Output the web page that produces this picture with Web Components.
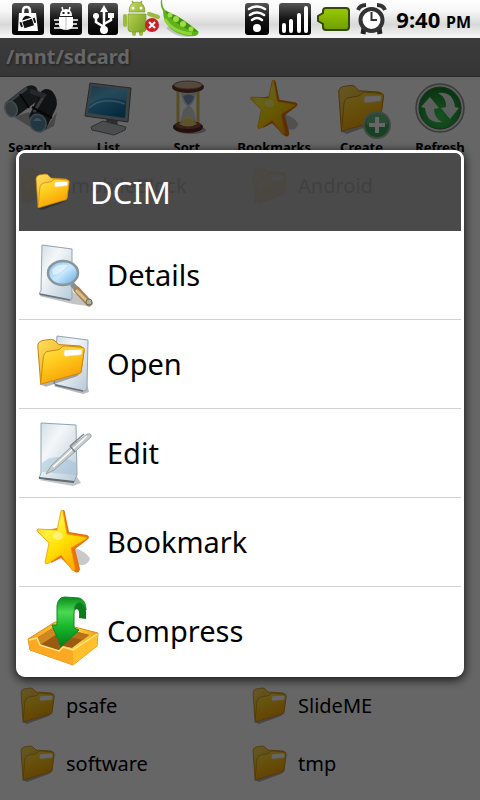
<!DOCTYPE html>
<html lang="en">
<head>
<meta charset="utf-8">
<meta name="viewport" content="width=device-width, initial-scale=1">
<title>/mnt/sdcard</title>
<style>
	html, body {
		height: 100%;
		margin: 0;
	}

	body {
		font-family: "Noto Sans", "Open Sans", sans-serif;
		color:       #000;
	}
</style>
</head>
<body>

<file-manager>
	<status-bar slot="status"></status-bar>
	<title-bar slot="title">/mnt/sdcard</title-bar>
	<tool-bar slot="tools">
		<tool-button icon="search">Search</tool-button>
		<tool-button icon="monitor">List</tool-button>
		<tool-button icon="hourglass">Sort</tool-button>
		<tool-button icon="starSmall">Bookmarks</tool-button>
		<tool-button icon="create">Create</tool-button>
		<tool-button icon="refresh">Refresh</tool-button>
	</tool-bar>
	<file-list slot="top">
		<file-item>.mobileBlock</file-item>
		<file-item>Android</file-item>
	</file-list>
	<file-list slot="bottom">
		<file-item>psafe</file-item>
		<file-item>SlideME</file-item>
		<file-item>software</file-item>
		<file-item>tmp</file-item>
	</file-list>
	<context-menu slot="menu" heading="DCIM">
		<menu-row icon="details">Details</menu-row>
		<menu-row icon="open">Open</menu-row>
		<menu-row icon="edit">Edit</menu-row>
		<menu-row icon="star">Bookmark</menu-row>
		<menu-row icon="compress">Compress</menu-row>
	</context-menu>
</file-manager>

<script>
(function ()
{
	const FOLDER =
	`
	<linearGradient id="fb" x1="0" y1="0" x2="1" y2="1">
		<stop offset="0" stop-color="#ffe05c"/><stop offset="1" stop-color="#e08c04"/>
	</linearGradient>
	<linearGradient id="ff" x1="0" y1="0" x2=".5" y2="1">
		<stop offset="0" stop-color="#ffe256"/><stop offset=".45" stop-color="#ffcb1c"/><stop offset="1" stop-color="#f79e04"/>
	</linearGradient>
	<path d="M3 35 L8 37 L30 29 L34 25Z" fill="#000" opacity=".3"/>
	<path d="M4 34 L2 6 Q2 3 5 2 L11 1 Q14 1 15 3 L17 5 L32 6 Q35 7 35 10 L33 25Z" fill="url(#fb)" stroke="#bf7f0c" stroke-width=".7"/>
	<path d="M4 35 L6 14 Q7 10 10 10 L16 9 Q18 9 19 7 Q20 6 22 6 L33 7 Q36 7 35 10 L33 25 Q33 27 31 27Z" fill="url(#ff)" stroke="#c9880c" stroke-width=".7"/>
	<path d="M21 9 L33 8.500 Q34 9 33.500 12 Q33 13 31 13 L22 14 Q20.500 14 20.500 12Z" fill="#fff" stroke="#e9cf78" stroke-width=".5"/>
	`;

	const STAR =
	`
	<linearGradient id="st" x1="0" y1="0" x2=".7" y2="1">
		<stop offset="0" stop-color="#ffb400"/><stop offset=".35" stop-color="#fff23c"/><stop offset=".6" stop-color="#ffe000"/><stop offset="1" stop-color="#ffa800"/>
	</linearGradient>
	<path d="M48 42 Q60 46 63 53 Q60 60 53 59 L42 55Z" fill="#777" opacity=".4"/>
	<path d="M36 4 Q38 4 38 7 L42 26 L60 29 Q64 31 60 34 L48 43 L53 63 Q52 68 48 66 L34 52 L24 57 L23 37 L12 25 L31 22Z" fill="#e8710a"/>
	<path d="M34 5 L30 24 L11 23 Q9 24 11 26 L22 37 L18 56 Q18 59 22 57 L34 49 L45 64 Q48 66 48 62 L44 42 L59 33 Q61 31 58 31 L40 28 L36 5Q35 3 34 5Z" fill="url(#st)" stroke="#f39a05" stroke-width=".8"/>
	<ellipse cx="31" cy="30" rx="5" ry="4" fill="#fff" opacity=".4"/>
	`;

	const PAGE =
	`
	<linearGradient id="pg" x1="0" y1="0" x2="1" y2="1">
		<stop offset="0" stop-color="#cfdde4"/><stop offset=".35" stop-color="#f4f7f8"/><stop offset="1" stop-color="#b6c8d6"/>
	</linearGradient>
	`;

	const TILE =
	`
	<linearGradient id="tl" x1="0" y1="0" x2="0" y2="1">
		<stop offset="0" stop-color="#555"/><stop offset=".5" stop-color="#151515"/><stop offset="1" stop-color="#000"/>
	</linearGradient>
	`;

	// name: [ viewBox, markup ]
	const ICONS =
	{
		folder: [ '0 0 38 38', FOLDER ],
		star: [ '0 0 72 72', STAR ],
		starSmall: [ '5 3 62 62', STAR ],

		details: [ '0 0 72 72', PAGE +
		`
		<linearGradient id="ln" x1="0" y1="0" x2="1" y2="1">
			<stop offset="0" stop-color="#7fbdf0"/><stop offset=".5" stop-color="#c9e7fd"/><stop offset="1" stop-color="#5ba4e2"/>
		</linearGradient>
		<path d="M12 57 L46 65 L60 67 L66 65 L44 52Z" fill="#555" opacity=".35"/>
		<path d="M15 6 L45 10 L45 59 Q45 62 42 61 L13 56 Q11 54 14 52Z" fill="url(#pg)" stroke="#8fa3b3"/>
		<path d="M13 55 L43 61" stroke="#66727c" stroke-width="1.500"/>
		<path d="M45 45 L53 54" stroke="#8b8f92" stroke-width="5"/>
		<path d="M50 51 L62 64" stroke="#a58556" stroke-width="7" stroke-linecap="round"/>
		<path d="M49 51 L60 62" stroke="#d9bc89" stroke-width="3"/>
		<circle cx="62" cy="63" r="3" fill="#aab09a" stroke="#6d6d55"/>
		<ellipse cx="36" cy="34" rx="15" ry="12" fill="url(#ln)" stroke="#8a949b" stroke-width="2.500"/>
		<path d="M25 31 Q30 24 41 26 Q34 35 26 36Z" fill="#fff" opacity=".55"/>
		` ],

		open: [ '0 0 72 72', PAGE +
		`
		<path d="M26 58 L56 66 L62 64 L60 56Z" fill="#555" opacity=".4"/>
		<path d="M30 8 L61 12 L60 60 Q59 64 56 63 L27 56Z" fill="url(#pg)" stroke="#8fa3b3"/>
		<path d="M28 57 L56 63" stroke="#66727c" stroke-width="1.500"/>
		<g transform="translate(8 10) scale(1.400 1.320)">${ FOLDER }</g>
		` ],

		edit: [ '0 0 72 72', PAGE +
		`
		<path d="M12 63 L46 69 L54 66 L50 60Z" fill="#555" opacity=".35"/>
		<path d="M14 6 L49 8 L50 58 L47 65 L12 61 L14 56Z" fill="url(#pg)" stroke="#8fa3b3"/>
		<path d="M15 46 Q28 34 49 46 L49 58 L15 55Z" fill="#9cc0d8" opacity=".5"/>
		<path d="M12 61 L47 65" stroke="#5f6a74" stroke-width="2"/>
		<path d="M19 57 L24 49 L46 28 L60 17 Q65 16 64 20 L50 33 L27 53Z" fill="#c6cbce" stroke="#8b949a" stroke-width=".8"/>
		<path d="M26 50 L48 30 L60 19" stroke="#fff" stroke-width="1.500"/>
		<path d="M43 29 L48 35 M43 29 L57 17" stroke="#7c858c" stroke-width="1.500" fill="none"/>
		` ],

		compress: [ '0 0 72 72',
		`
		<linearGradient id="ty" x1="0" y1="0" x2="1" y2="0">
			<stop offset="0" stop-color="#f5a21a"/><stop offset=".5" stop-color="#ffc73e"/><stop offset=".65" stop-color="#ffd84a"/><stop offset="1" stop-color="#f1a010"/>
		</linearGradient>
		<linearGradient id="ar" x1="0" y1="0" x2="0" y2="1">
			<stop offset="0" stop-color="#0a8a1d"/><stop offset=".3" stop-color="#4bd950"/><stop offset=".6" stop-color="#16b62c"/><stop offset="1" stop-color="#067a18"/>
		</linearGradient>
		<path d="M1 44 L28 27 L71 38 L70 51 L46 70 L3 55Z" fill="url(#ty)" stroke="#e08c10"/>
		<path d="M10 43 L29 31 L62 40 L45 53 L36 51 L32 56 L13 50Z" fill="#9a5a12"/>
		<path d="M10 43 L29 31 L30 39 L13 50Z" fill="#d08722"/>
		<path d="M29 31 L62 40 L56 45 L30 39Z" fill="#b97118"/>
		<path d="M1 44 L10 43 L13 50 L32 56 L36 51 L46 54 L46 70 L3 55Z" fill="#fbaa22"/>
		<path d="M46 54 L71 38 L70 51 L46 70Z" fill="#ffc02c"/>
		<path d="M2 45 L10 43 L13 50 L32 56 L36 52 L46 55 L70 39" fill="none" stroke="#ffe68a" stroke-width="1.500"/>
		<path d="M44 9 Q48 2 55 6 Q60 10 59 24 L52 23 Q53 12 48 15Z" fill="#0b7e1b"/>
		<path d="M30 30 L30 11 Q31 2 38 2 L52 3 Q59 5 59 15 Q56 6 51 8 Q47 10 47 19 L47 33 L52 35 L34 52 L25 30Z" fill="url(#ar)" stroke="#0a8a1d"/>
		` ],

		search: [ '0 0 56 56',
		`
		<path d="M12 38 L27 33 L42 52 L55 33 L52 47 L38 54Z" fill="#000" opacity=".3"/>
		<path d="M3 24 L22 9 Q29 4 34 8 L38 16 L34 23 L15 37 Q4 40 3 24Z" fill="#343c3f"/>
		<path d="M27 37 L38 14 Q43 7 50 12 Q57 20 54 29 L44 50 Q32 56 27 37Z" fill="#282f33"/>
		<path d="M8 22 L25 9 M32 33 L43 15" stroke="#8c9599" stroke-width="3"/>
		<path d="M18 15 L27 29 M30 28 L50 39" stroke="#111" stroke-width="2"/>
		<path d="M28 12 L43 17" stroke="#59646a" stroke-width="5"/>
		<ellipse cx="9" cy="30" rx="6" ry="8" fill="#82959e" stroke="#b0bcc0" stroke-width="1.500" transform="rotate(-20 9 30)"/>
		<ellipse cx="36" cy="44" rx="8" ry="9" fill="#548ba3" stroke="#a6b5bc" stroke-width="1.500" transform="rotate(-30 36 44)"/>
		<path d="M31 42 Q35 36 40 42Z" fill="#d5edf7" opacity=".6"/>
		` ],

		monitor: [ '0 0 56 56',
		`
		<linearGradient id="sc" x1="0" y1="0" x2=".6" y2="1">
			<stop offset="0" stop-color="#1e6490"/><stop offset=".4" stop-color="#3fa8d8"/><stop offset="1" stop-color="#126c9c"/>
		</linearGradient>
		<path d="M26 38 L38 40 L37 50 L27 49Z" fill="#6c747a"/>
		<path d="M11 48 L23 42 L46 48 L45 51 L34 56 L12 51Z" fill="#b8bfc3" stroke="#70787c"/>
		<path d="M10 4 L51 9 L48 43 L5 37Z" fill="#98a4ab" stroke="#5b656b"/>
		<path d="M12 7 L47 11 L45 39 L8 34Z" fill="url(#sc)"/>
		<path d="M9 26 Q21 14 46 22 L47 11 L12 7Z" fill="#9bd7f2" opacity=".35"/>
		<path d="M9 29 Q22 17 45 25" fill="none" stroke="#d5f3ff" stroke-width="1.500" opacity=".6"/>
		` ],

		hourglass: [ '0 0 56 56',
		`
		<ellipse cx="32" cy="51" rx="15" ry="4" fill="#000" opacity=".3"/>
		<path d="M22 9 H37 Q38 21 31 27 Q38 33 37 47 H22 Q21 33 28 27 Q21 21 22 9Z" fill="#b9c8d6" opacity=".7"/>
		<path d="M24 17 Q29 14 35 17 Q34 23 29 26 Q25 22 24 17Z" fill="#7b99bd"/>
		<path d="M22 46 Q24 39 29 36 Q35 39 36 46Z" fill="#f0df7b"/>
		<path d="M19 8 V47 M39 8 V47" stroke="#d8c04f" stroke-width="3"/>
		<ellipse cx="29" cy="48" rx="15" ry="6" fill="#5b2620"/>
		<ellipse cx="29" cy="46" rx="13" ry="4" fill="#8e5045"/>
		<path d="M20 45 Q29 35 38 45 Q29 50 20 45Z" fill="#e9cf6d"/>
		<ellipse cx="29" cy="8" rx="16" ry="6" fill="#6e342b"/>
		<ellipse cx="29" cy="6" rx="14" ry="4" fill="#d0b79a" stroke="#9a6d5c"/>
		` ],

		create: [ '0 0 56 56',
		`
		<g transform="translate(2 5) scale(1.350)">${ FOLDER }</g>
		<circle cx="43" cy="46" r="13" fill="#37a455" stroke="#a2b8a6" stroke-width="2"/>
		<path d="M32 45 A11 11 0 0 1 54 45 Q43 49 32 45Z" fill="#fff" opacity=".25"/>
		<path d="M43 38 V54 M35 46 H51" stroke="#fff" stroke-width="4"/>
		` ],

		refresh: [ '0 0 56 56',
		`
		<radialGradient id="rf" cx=".5" cy=".7" r=".7">
			<stop offset="0" stop-color="#3bd04d"/><stop offset="1" stop-color="#147f2b"/>
		</radialGradient>
		<circle cx="28" cy="29" r="24" fill="#e9eeea" stroke="#8b918d" stroke-width="1.500"/>
		<circle cx="28" cy="29" r="21" fill="url(#rf)" stroke="#4b6a50"/>
		<path d="M9 28 L18 18 L27 29 L22 30 Q22 39 30 43 Q15 45 13 29Z" fill="#e8eeea"/>
		<path d="M47 29 L38 40 L29 29 L34 28 Q35 19 26 14 Q41 12 43 28Z" fill="#e8eeea"/>
		` ],

		lock: [ '0 0 32 32', TILE +
		`
		<rect width="32" height="32" rx="3" fill="url(#tl)"/>
		<path d="M11 12 V8 Q11 4 14.500 4 Q18 4 18 8 V12" fill="none" stroke="#fff" stroke-width="2.500"/>
		<path d="M7 10 H24 L26 28 H6Z" fill="#fff"/>
		<g transform="rotate(-18 16 20)"><path d="M11 16 Q16 9 21 16Z M11 17 H21 V24 H11Z M8 17 H10 V22 H8Z M22 17 H24 V22 H22Z" fill="#111"/><path d="M10 16.500 H22" stroke="#fff"/></g>
		` ],

		bug: [ '0 0 32 32', TILE +
		`
		<rect width="32" height="32" rx="3" fill="url(#tl)"/>
		<path d="M12 4 L13 8 M20 4 L19 8 M4 17 H28 M5 21 H27 M4 25 H28" stroke="#fff" stroke-width="1.500"/>
		<path d="M10 13 Q10 6 16 6 Q22 6 22 13Z M9 14 H23 V23 Q21 27 16 27 Q11 27 9 23Z" fill="#fff"/>
		<path d="M16 14 V27" stroke="#bbb"/>
		<path d="M12.500 10 h2 M17.500 10 h2" stroke="#222" stroke-width="2"/>
		` ],

		usb: [ '0 0 30 32', TILE +
		`
		<rect width="30" height="32" rx="3" fill="url(#tl)"/>
		<path d="M16 27 V7 M16 24 L8 19 V14 M16 21 L23 17 V12" fill="none" stroke="#fff" stroke-width="2.500"/>
		<path d="M16 2 L20 9 H12Z" fill="#fff"/>
		<circle cx="16" cy="27" r="4" fill="#fff"/>
		<circle cx="8" cy="13" r="3" fill="#fff"/>
		<rect x="20" y="10" width="6" height="5" fill="#fff"/>
		` ],

		robot: [ '0 0 36 32',
		`
		<linearGradient id="rb" x1="0" y1="0" x2="1" y2="1">
			<stop offset="0" stop-color="#c4dd63"/><stop offset="1" stop-color="#759d1c"/>
		</linearGradient>
		<path d="M8 -2 L10 1 M18 -2 L16 1" stroke="#8eb32c" stroke-width="1.500"/>
		<path d="M1 13 V22 M25 11 L34 14 M10 26 V31 M17 26 V31" stroke="#9abb3e" stroke-width="4" stroke-linecap="round"/>
		<path d="M5 9 Q5 -1 13 -1 Q21 -1 21 9Z M4 11 H22 V27 Q21 29 18 29 H8 Q4 29 4 26Z" fill="url(#rb)" stroke="#78932d" stroke-width=".6"/>
		<circle cx="9" cy="5" r="1.500" fill="#fff"/><circle cx="17" cy="5" r="1.500" fill="#fff"/>
		<circle cx="28" cy="22" r="7" fill="#ca2028"/>
		<path d="M25 19 L31 25 M31 19 L25 25" stroke="#fff" stroke-width="2"/>
		` ],

		pea: [ '0 0 36 32',
		`
		<path d="M0 25 Q12 37 30 33 L10 20Z" fill="#777" opacity=".35"/>
		<path d="M-4 -3 Q-4 4 -1 7 Q6 11 11 13 Q20 18 32 28 Q34 31 29 33 Q15 34 5 26 Q-3 19 -3 8 Q-6 3 -5 -3Z" fill="#5eb31b"/>
		<path d="M-1 8 Q4 16 14 22 Q23 28 32 29 Q22 20 11 13Z" fill="#3f8f10"/>
		<g fill="#9edc45"><circle cx="4" cy="12" r="2.500"/><circle cx="10" cy="16" r="3"/><circle cx="17" cy="21" r="3"/><circle cx="25" cy="26" r="2.500"/></g>
		<path d="M-1 16 Q6 29 26 31" fill="none" stroke="#8fd53a" stroke-width="3"/>
		` ],

		wifi: [ '0 0 27 32', TILE +
		`
		<rect width="24" height="32" rx="3" fill="url(#tl)"/>
		<circle cx="12" cy="25" r="4" fill="#fff"/>
		<path d="M4 6 Q12 1 20 6 M5 12 Q12 7 19 12 M7 17 Q12 13 17 17" fill="none" stroke="#fff" stroke-width="2.500" stroke-linecap="round"/>
		` ],

		signal: [ '0 0 32 32', TILE +
		`
		<rect width="32" height="32" rx="3" fill="url(#tl)"/>
		<path d="M5 22 V28 M12 18 V28 M20 12 V28 M27 5 V28" stroke="#fff" stroke-width="4" stroke-linecap="round"/>
		` ],

		battery: [ '0 0 32 32',
		`
		<linearGradient id="bt" x1="0" y1="0" x2="0" y2="1">
			<stop offset="0" stop-color="#9aca00"/><stop offset="1" stop-color="#6f9e00"/>
		</linearGradient>
		<path d="M8 5 H28 Q31 5 31 8 V24 Q31 27 28 27 H8 Q5 27 5 24 V21 L0 18 V13 L5 10 V8 Q5 5 8 5Z" fill="url(#bt)" stroke="#344a08" stroke-width="2"/>
		` ],

		alarm: [ '0 0 32 32',
		`
		<path d="M1 7 Q3 2 9 2 M20 2 Q26 2 28 7" fill="none" stroke="#333" stroke-width="4"/>
		<path d="M7 25 L6 31 M22 25 L23 31" stroke="#222" stroke-width="5"/>
		<circle cx="14.500" cy="17" r="11" fill="#fff" stroke="#333" stroke-width="4"/>
		<path d="M14.500 9 V17 H20" fill="none" stroke="#333" stroke-width="2"/>
		` ],
	};

	function define( name, render )
	{
		customElements.define( name, class extends HTMLElement
		{
			constructor()
			{
				super();

				this.attachShadow({ mode: 'open' });
			}

			connectedCallback()
			{
				this.shadowRoot.innerHTML = render( this );
			}
		});
	}

	define( 'app-icon', $el =>
	{
		const [ box, markup ] = ICONS[ $el.getAttribute( 'name' ) ];

		return `
		<style>
			:host {
				display: block;
				flex:    none;
				width:   var( --icon-width, 32px );
				height:  var( --icon-height, 32px );
			}
			svg {
				display:  block;
				width:    100%;
				height:   100%;
				overflow: visible;
			}
		</style>
		<svg viewBox="${ box }" fill="none" aria-hidden="true">${ markup }</svg>
		`;
	});

	define( 'file-manager', () =>
	`
	<style>
		:host {
			display:        flex;
			flex-direction: column;
			min-height:     100%;
		}
		main {
			position:       relative;
			flex:           1;
			display:        flex;
			flex-direction: column;
			background:     #fff;
		}
		.files {
			flex:            1;
			display:         flex;
			flex-direction:  column;
			justify-content: space-between;
			padding-bottom:  7px;
		}
		.scrim {
			position:        absolute;
			inset:           0;
			display:         flex;
			align-items:     center;
			justify-content: center;
			padding:         0 16px 11px;
			background:      rgba( 0, 0, 0, 0.6 );
		}
	</style>
	<slot name="status"></slot>
	<main>
		<slot name="title"></slot>
		<slot name="tools"></slot>
		<div class="files">
			<slot name="top"></slot>
			<slot name="bottom"></slot>
		</div>
		<div class="scrim"><slot name="menu"></slot></div>
	</main>
	` );

	define( 'status-bar', () =>
	`
	<style>
		:host {
			display:         flex;
			justify-content: space-between;
			height:          38px;
			padding:         0 9px 0 12px;
			background:      linear-gradient( #fff, #f6f6f6 30%, #d8d8d8 65%, #f4f4f4 95% );
		}
		div {
			display:     flex;
			align-items: center;
			gap:         6px;
		}
		.system { gap: 7px; }
		.tight { --icon-width: 30px; }
		.wide { --icon-width: 36px; }
		.wifi { --icon-width: 27px; }
		time {
			font-size:   22px;
			font-weight: 700;
		}
		small { font-size: 16px; }
	</style>
	<div>
		<app-icon name="lock"></app-icon>
		<app-icon name="bug"></app-icon>
		<app-icon name="usb" class="tight"></app-icon>
		<app-icon name="robot" class="wide"></app-icon>
		<app-icon name="pea" class="wide"></app-icon>
	</div>
	<div class="system">
		<app-icon name="wifi" class="wifi"></app-icon>
		<app-icon name="signal"></app-icon>
		<app-icon name="battery"></app-icon>
		<app-icon name="alarm"></app-icon>
		<time datetime="21:40">9:40 <small>PM</small></time>
	</div>
	` );

	define( 'title-bar', () =>
	`
	<style>
		:host {
			display:       block;
			padding:       0 6px;
			border-bottom: 1px solid #666;
			background:    linear-gradient( #959595, #868686 );
		}
		h1 {
			margin:      0;
			font-size:   20px;
			line-height: 38px;
			color:       #fff;
			text-shadow: 1px 1px 3px #444;
		}
	</style>
	<h1><slot></slot></h1>
	` );

	define( 'tool-bar', () =>
	`
	<style>
		:host {
			display:         flex;
			justify-content: space-between;
			padding:         2px 12px 0 2px;
		}
	</style>
	<slot></slot>
	` );

	define( 'tool-button', $el =>
	`
	<style>
		:host {
			display:       block;
			--icon-width:  56px;
			--icon-height: 56px;
		}
		button {
			display:        flex;
			flex-direction: column;
			align-items:    center;
			gap:            2px;
			min-width:      56px;
			padding:        0;
			border:         0;
			background:     none;
			font:           700 13px/20px "Noto Sans", "Open Sans", sans-serif;
			color:          #000;
		}
	</style>
	<button type="button"><app-icon name="${ $el.getAttribute( 'icon' ) }"></app-icon><slot></slot></button>
	` );

	define( 'file-list', () =>
	`
	<style>
		:host {
			display:               grid;
			grid-template-columns: 1fr 1fr;
			grid-auto-rows:        58px;
			padding-left:          16px;
		}
	</style>
	<slot></slot>
	` );

	define( 'file-item', () =>
	`
	<style>
		:host {
			display:       flex;
			align-items:   center;
			gap:           9px;
			padding-left:  3px;
			font-size:     20px;
			line-height:   28px;
			--icon-width:  38px;
			--icon-height: 38px;
		}
	</style>
	<app-icon name="folder"></app-icon>
	<span><slot></slot></span>
	` );

	define( 'context-menu', $el =>
	`
	<style>
		:host {
			display:       block;
			flex:          1;
			border:        3px solid #fff;
			border-bottom-width: 2px;
			border-radius: 9px;
			box-shadow:    0 2px 10px 1px rgba( 0, 0, 0, 0.75 );
		}
		header {
			display:       flex;
			align-items:   center;
			gap:           18px;
			height:        78px;
			padding:       0 15px;
			border-radius: 6px 6px 0 0;
			background:    rgba( 71, 71, 71, 0.9 );
			--icon-width:  38px;
			--icon-height: 38px;
		}
		h2 {
			margin:      0;
			font-size:   31px;
			font-weight: 400;
			line-height: 40px;
			color:       #fff;
		}
		.rows {
			background: #fff;
		}
	</style>
	<header>
		<app-icon name="folder"></app-icon>
		<h2>${ $el.getAttribute( 'heading' ) }</h2>
	</header>
	<div class="rows"><slot></slot></div>
	` );

	define( 'menu-row', $el =>
	`
	<style>
		:host {
			display:       block;
			border-bottom: 1px solid #d2d2d2;
			--icon-width:  72px;
			--icon-height: 72px;
		}
		:host( :last-child ) {
			border-bottom: 0;
		}
		button {
			display:     flex;
			align-items: center;
			gap:         8px;
			width:       100%;
			height:      88px;
			padding:     0 8px;
			border:      0;
			background:  none;
			font:        400 29px/40px "Noto Sans", "Open Sans", sans-serif;
			color:       #000;
		}
	</style>
	<button type="button"><app-icon name="${ $el.getAttribute( 'icon' ) }"></app-icon><slot></slot></button>
	` );
})();
</script>
</body>
</html>
